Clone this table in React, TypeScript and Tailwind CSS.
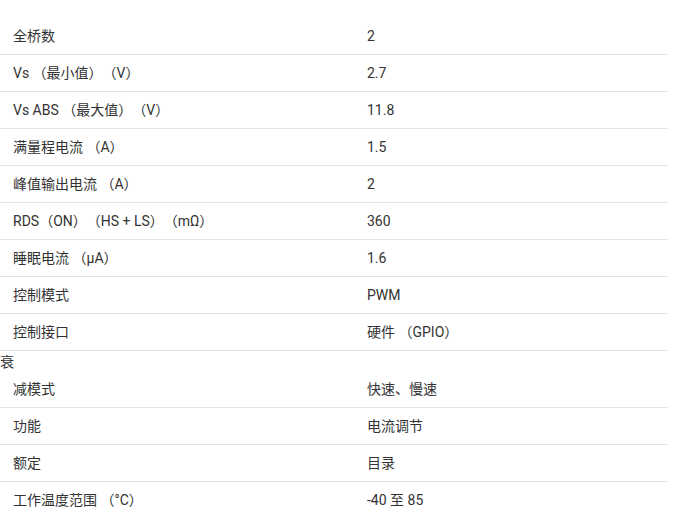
const rows: [string, string][] = [
  ["全桥数", "2"],
  ["Vs （最小值）（V）", "2.7"],
  ["Vs ABS （最大值）（V）", "11.8"],
  ["满量程电流 （A）", "1.5"],
  ["峰值输出电流 （A）", "2"],
  ["RDS（ON）（HS + LS）（mΩ）", "360"],
  ["睡眠电流 （µA）", "1.6"],
  ["控制模式", "PWM"],
  ["控制接口", "硬件 （GPIO）"],
];

const rest: [string, string][] = [
  ["功能", "电流调节"],
  ["额定", "目录"],
  ["工作温度范围 （°C）", "-40 至 85"],
];

function Row({ label, value, last }: { label: string; value: string; last?: boolean }) {
  return (
    <div className={`flex h-[37px] items-center ${last ? "" : "border-b border-[#e3e3e3]"}`}>
      <div className="w-[367px] pl-[13px]">{label}</div>
      <div className="flex-1">{value}</div>
    </div>
  );
}

export default function App() {
  return (
    <div
      className="w-[677px] h-[516px] overflow-hidden bg-white pt-[18px] text-[14px] text-[#333] [text-spacing-trim:space-all]"
      style={{ fontFamily: 'Roboto, "Noto Sans CJK SC", sans-serif' }}
    >
      <div className="w-[668px]">
        {rows.map(([l, v]) => (
          <Row key={l} label={l} value={v} />
        ))}
        <div className="h-[20px] leading-[20px] pt-[1px]">衰</div>
        <Row label="减模式" value="快速、慢速" />
        {rest.map(([l, v], i) => (
          <Row key={l} label={l} value={v} last={i === rest.length - 1} />
        ))}
      </div>
    </div>
  );
}
